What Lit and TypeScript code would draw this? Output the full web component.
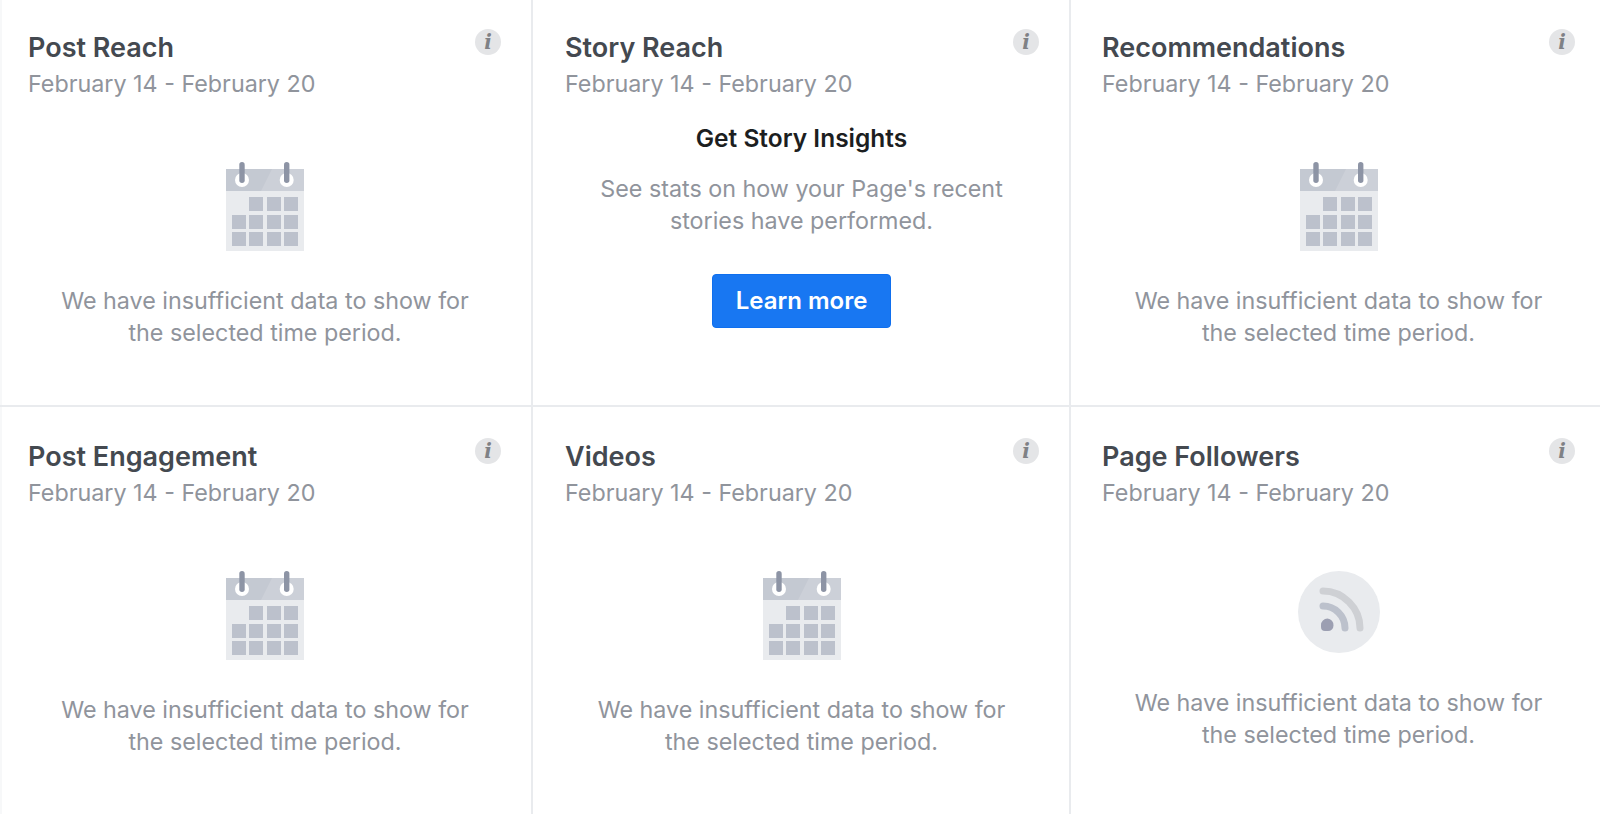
import { LitElement, html, css, svg } from "lit";
import { customElement, property } from "lit/decorators.js";

const calendarIcon = svg`<svg width="78" height="90" viewBox="26 12 78 90">
  <rect x="26" y="19" width="78" height="82" fill="#e9ebee" />
  <rect x="26" y="19" width="78" height="22" fill="#c4c9d2" />
  <path d="M61 41 L72 19 H104 V41 Z" fill="#ccd0d8" />
  <circle cx="42" cy="30" r="7" fill="#fff" />
  <circle cx="86.7" cy="30" r="7" fill="#fff" />
  <rect x="39.3" y="12" width="5.4" height="21" rx="2.7" fill="#8d94a5" />
  <rect x="84" y="12" width="5.4" height="21" rx="2.7" fill="#8d94a5" />
  ${[
    [49, 47], [67, 47], [84, 47],
    [32, 65], [49, 65], [67, 65], [84, 65],
    [32, 82], [49, 82], [67, 82], [84, 82],
  ].map(([x, y]) => svg`<rect x=${x} y=${y} width="14" height="14" fill="#bcc1cc" />`)}
</svg>`;

const feedIcon = svg`<svg width="82" height="82" viewBox="0 0 82 82">
  <circle cx="41" cy="41" r="41" fill="#e9ebee" />
  <path d="M25 20 C45 20 62 37 62 57" fill="none" stroke="#ced0d4" stroke-width="7" stroke-linecap="round" />
  <path d="M25 35 C37 35 47 45 47 57" fill="none" stroke="#bcc1cc" stroke-width="7" stroke-linecap="round" />
  <path d="M23 54 a6.5 6.5 0 0 1 6.5 -6.5 a6.5 6.5 0 0 1 6 7 a5.5 5.5 0 0 1 -5.5 5.5 h-3 a4 4 0 0 1 -4 -4 z" fill="#9c9fb2" />
</svg>`;

@customElement("info-card")
export class InfoCard extends LitElement {
  @property() heading = "";
  @property() kind = "calendar";

  static styles = css`
    :host {
      display: block;
      height: 100%;
      box-sizing: border-box;
      position: relative;
      padding: var(--pad-top) var(--pad-right) 0 var(--pad-left);
      background: #fff;
    }
    .title {
      font-size: 27px;
      line-height: 36px;
      font-weight: 600;
      color: #444950;
      white-space: nowrap;
    }
    .date {
      font-size: 23.3px;
      line-height: 36px;
      color: #90949c;
    }
    .info {
      position: absolute;
      top: calc(var(--pad-top) - 1px);
      right: var(--info-right);
      width: 26px;
      height: 26px;
      border-radius: 50%;
      background: #e4e5e7;
      color: #7f8185;
      font-family: "DejaVu Serif", serif;
      font-style: italic;
      font-weight: 700;
      font-size: 20px;
      line-height: 26px;
      text-align: center;
    }
    .body {
      display: flex;
      flex-direction: column;
      align-items: center;
      text-align: center;
    }
    .icon {
      height: 90px;
      margin-top: 60px;
    }
    .icon svg {
      display: block;
    }
    .icon.feed {
      height: 82px;
      margin-top: 60px;
    }
    .msg {
      font-size: 23.3px;
      line-height: 32px;
      color: #90949c;
      margin-top: 33px;
      white-space: nowrap;
    }
    .feed + .msg {
      margin-top: 34px;
    }
    .insights .head {
      font-size: 24.5px;
      line-height: 32px;
      font-weight: 600;
      color: #1c1e21;
      margin-top: 20px;
    }
    .insights .msg {
      margin-top: 19px;
    }
    .btn {
      width: 179px;
      height: 54px;
      margin-top: 37px;
      box-sizing: border-box;
      border: 1px solid #0f6fee;
      border-radius: 4px;
      background: #1877f2;
      color: #fff;
      font-size: 24px;
      font-weight: 600;
      line-height: 52px;
    }
  `;

  renderBody() {
    if (this.kind === "insights") {
      return html`<div class="body insights">
        <div class="head">Get Story Insights</div>
        <div class="msg">See stats on how your Page's recent<br />stories have performed.</div>
        <div class="btn">Learn more</div>
      </div>`;
    }
    const feed = this.kind === "feed";
    return html`<div class="body">
      <div class="icon ${feed ? "feed" : ""}">${feed ? feedIcon : calendarIcon}</div>
      <div class="msg">We have insufficient data to show for<br />the selected time period.</div>
    </div>`;
  }

  render() {
    return html`
      <div class="title">${this.heading}</div>
      <div class="date">February 14 - February 20</div>
      <div class="info">i</div>
      ${this.renderBody()}
    `;
  }
}

@customElement("app-root")
export class AppRoot extends LitElement {
  static styles = css`
    :host {
      display: block;
      font-family: Inter, "Liberation Sans", sans-serif;
    }
    .grid {
      display: grid;
      grid-template-columns: 531px 536px 1fr;
      grid-template-rows: 405px 1fr;
      gap: 2px;
      width: 1600px;
      height: 814px;
      background: #e9ebee;
      overflow: hidden;
      --pad-top: 30px;
      --pad-left: 32px;
      --pad-right: 31px;
      --info-right: 30px;
    }
    .first {
      --pad-left: 28px;
      --pad-right: 29px;
      box-shadow: inset 2px 0 0 #f7f8f9;
    }
    .last {
      --pad-left: 31px;
      --pad-right: 25px;
      --info-right: 25px;
    }
    .low {
      --pad-top: 32px;
    }
  `;

  render() {
    return html`<div class="grid">
      <info-card class="first" heading="Post Reach"></info-card>
      <info-card heading="Story Reach" kind="insights"></info-card>
      <info-card class="last" heading="Recommendations"></info-card>
      <info-card class="first low" heading="Post Engagement"></info-card>
      <info-card class="low" heading="Videos"></info-card>
      <info-card class="last low" heading="Page Followers" kind="feed"></info-card>
    </div>`;
  }
}
